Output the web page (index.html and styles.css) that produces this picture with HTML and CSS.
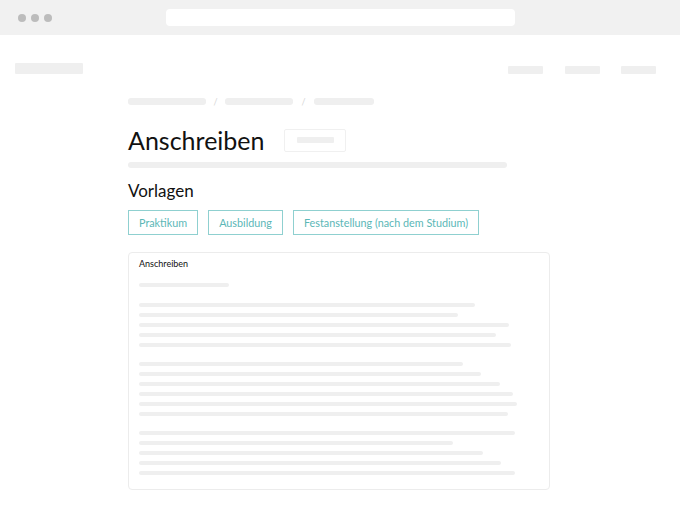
FILE: index.html
```html
<!DOCTYPE html>
<html lang="de">
<head>
<meta charset="utf-8">
<title>Anschreiben</title>
<link rel="stylesheet" href="styles.css">
</head>
<body>
<div class="chrome">
  <div class="dots"><span class="dot"></span><span class="dot"></span><span class="dot"></span></div>
  <div class="address"></div>
</div>
<header class="nav">
  <div class="logo"></div>
  <div class="nav-links">
    <span class="nav-item"></span><span class="nav-item"></span><span class="nav-item"></span>
  </div>
</header>
<main class="main">
  <div class="crumbs">
    <span class="crumb c1"></span><span class="slash">/</span>
    <span class="crumb c2"></span><span class="slash s2">/</span>
    <span class="crumb c3"></span>
  </div>
  <div class="title-row">
    <h1 class="title">Anschreiben</h1>
    <div class="badge"><span class="badge-bar"></span></div>
  </div>
  <div class="subline"></div>
  <h2 class="section">Vorlagen</h2>
  <div class="buttons">
    <button class="btn">Praktikum</button>
    <button class="btn">Ausbildung</button>
    <button class="btn">Festanstellung (nach dem Studium)</button>
  </div>
  <section class="card">
    <div class="card-title">Anschreiben</div>
    <div class="para p0"><span class="line" style="width:90px"></span></div>
    <div class="para p1">
      <span class="line" style="width:336px"></span>
      <span class="line" style="width:319px"></span>
      <span class="line" style="width:370px"></span>
      <span class="line" style="width:357px"></span>
      <span class="line" style="width:372px"></span>
    </div>
    <div class="para p2">
      <span class="line" style="width:324px"></span>
      <span class="line" style="width:342px"></span>
      <span class="line" style="width:361px"></span>
      <span class="line" style="width:374px"></span>
      <span class="line" style="width:378px"></span>
      <span class="line" style="width:369px"></span>
    </div>
    <div class="para p3">
      <span class="line" style="width:376px"></span>
      <span class="line" style="width:314px"></span>
      <span class="line" style="width:344px"></span>
      <span class="line" style="width:362px"></span>
      <span class="line" style="width:376px"></span>
    </div>
  </section>
</main>
</body>
</html>
```
FILE: styles.css
```css
* { box-sizing: border-box; }
html, body { margin: 0; padding: 0; background: #fff; }
body { font-family: Lato, "Noto Sans", sans-serif; color: #111; width: 680px; height: 520px; overflow: hidden; }

.chrome { height: 35px; background: #f1f1f1; display: flex; align-items: center; padding-left: 18px; }
.dots { display: flex; gap: 5px; }
.dot { width: 8px; height: 8px; border-radius: 50%; background: #bcbcbc; }
.address { margin-left: 114px; width: 349px; height: 17px; background: #fff; border-radius: 4px; margin-top: -1px; }

.nav { display: flex; justify-content: space-between; align-items: flex-start; padding: 28px 24px 0 15px; }
.logo { width: 68px; height: 11px; background: #efefef; border-radius: 1px; }
.nav-links { display: flex; gap: 21px; margin-top: 3px; }
.nav-item { width: 35px; height: 8px; background: #efefef; border-radius: 1px; }
.nav-item:first-child { margin-right: 1px; }

.main { margin-left: 128px; width: 422px; }

.crumbs { display: flex; align-items: center; margin-top: 24px; height: 7px; }
.crumb { height: 7px; background: #efefef; border-radius: 3px; }
.c1 { width: 78px; }
.c2 { width: 68px; }
.c3 { width: 60px; }
.slash { color: #d6d6d6; font-size: 9px; width: 19px; text-align: center; line-height: 7px; }
.s2 { width: 21px; }

.title-row { display: flex; align-items: center; margin-top: 23px; gap: 20px; }
.title { margin: 0; font-size: 25px; font-weight: 400; line-height: 24px; letter-spacing: 0; }
.badge { width: 62px; height: 23px; border: 1px solid #f0f0f0; border-radius: 2px; display: flex; align-items: center; justify-content: center; }
.badge-bar { width: 37px; height: 6px; background: #efefef; border-radius: 1px; }

.subline { width: 379px; height: 6px; background: #efefef; border-radius: 3px; margin-top: 10px; }

.section { margin: 14px 0 0; font-size: 17px; font-weight: 400; line-height: 18px; }

.buttons { display: flex; gap: 10px; margin-top: 10px; }
.btn { font-family: Lato, "Noto Sans", sans-serif; font-size: 10.8px; color: #5bb7b7; background: #fff; border: 1px solid #8fd0d0; border-radius: 0; height: 25px; padding: 0 10px; line-height: 23px; }

.card { margin-top: 17px; border: 1px solid #ececec; border-radius: 4px; padding: 5px 10px 12px; height: 238px; }
.card-title { font-size: 9px; line-height: 11px; color: #111; }
.para { display: flex; flex-direction: column; gap: 6px; }
.p0 { margin-top: 14px; }
.p1 { margin-top: 16px; }
.p2 { margin-top: 15px; }
.p3 { margin-top: 15px; }
.line { display: block; height: 4px; background: #efefef; border-radius: 2px; }
```
